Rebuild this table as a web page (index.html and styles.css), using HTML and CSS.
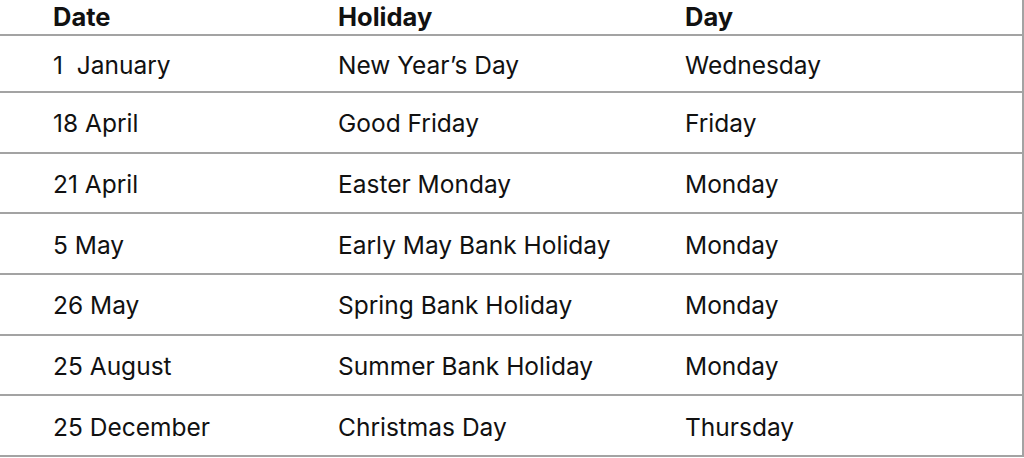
FILE: index.html
```html
<!DOCTYPE html>
<html lang="en">
<head>
<meta charset="utf-8">
<title>Bank holidays</title>
<link rel="stylesheet" href="styles.css">
</head>
<body>
<table class="holidays">
  <thead>
    <tr class="head-row">
      <th class="c-date">Date</th>
      <th class="c-holiday">Holiday</th>
      <th class="c-day">Day</th>
    </tr>
  </thead>
  <tbody>
    <tr><td>1 &nbsp;January</td><td>New Year’s Day</td><td>Wednesday</td></tr>
    <tr><td>18 April</td><td>Good Friday</td><td>Friday</td></tr>
    <tr><td>21 April</td><td>Easter Monday</td><td>Monday</td></tr>
    <tr><td>5 May</td><td>Early May Bank Holiday</td><td>Monday</td></tr>
    <tr><td>26 May</td><td>Spring Bank Holiday</td><td>Monday</td></tr>
    <tr><td>25 August</td><td>Summer Bank Holiday</td><td>Monday</td></tr>
    <tr><td>25 December</td><td>Christmas Day</td><td>Thursday</td></tr>
  </tbody>
</table>
</body>
</html>
```

FILE: styles.css
```css
html, body {
  margin: 0;
  padding: 0;
  background: #ffffff;
}

body {
  font-family: Inter, "Noto Sans", "Liberation Sans", sans-serif;
  color: #111111;
  overflow: hidden;
}

.holidays {
  width: 1024px;
  border-collapse: collapse;
  table-layout: fixed;
  border-right: 2px solid #a3a3a3;
}

.holidays th,
.holidays td {
  padding: 0 0 0 53px;
  text-align: left;
  font-size: 24.5px;
  line-height: 28px;
  white-space: nowrap;
  border-bottom: 2px solid #a3a3a3;
  vertical-align: middle;
}

.holidays th {
  font-weight: 700;
  font-size: 25.5px;
  height: 34px;
  line-height: 28px;
}

.holidays td {
  font-weight: 400;
  height: 56.67px;
  padding-top: 2px;
}

.holidays tbody tr:first-child td {
  height: 53px;
}

.c-date { width: 232px; }
.c-holiday { width: 294px; }
```
